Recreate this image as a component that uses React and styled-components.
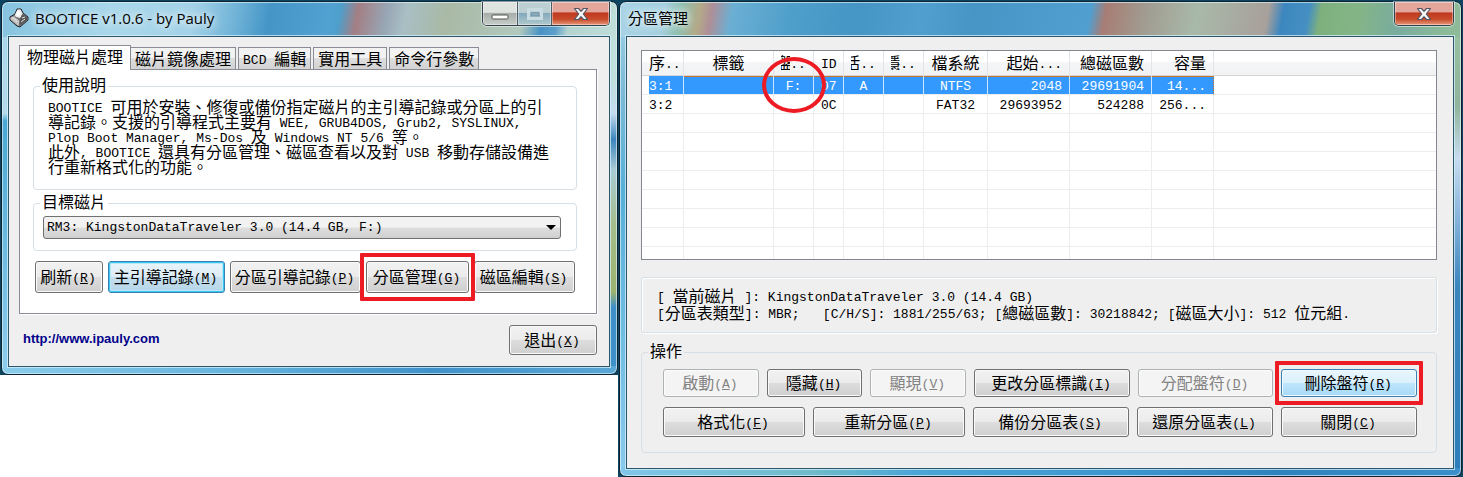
import React from "react";
import styled, { createGlobalStyle, css } from "styled-components";

const GlobalStyle = createGlobalStyle`
  * { box-sizing: border-box; }
  body {
    margin: 0;
    background: #fff;
    color: #000;
    font: 16px/16px "Noto Sans CJK TC", sans-serif;
  }
`;

const Desktop = styled.main`
  display: grid;
  grid-template-columns: minmax(0, 618fr) minmax(0, 845fr);
  align-items: start;
`;

const WindowSlot = styled.div`
  padding: ${(p) => (p.$last ? "1px 1px 0 1px" : "1px 0 0 1px")};
  background: #0d4460;
`;

const Window = styled.section`
  display: flex;
  flex-direction: column;
  padding: 0 7px 7px 6px;
  border: 1px solid #0e2230;
  border-radius: 7px;
  background: ${(p) => p.$glass};
  box-shadow: inset 0 0 0 1px rgba(225, 245, 255, 0.65);
`;

const TitleBar = styled.header`
  display: flex;
  align-items: flex-start;
  height: 34px;
`;

const Title = styled.h1`
  flex: 1;
  display: flex;
  align-items: center;
  gap: 6px;
  height: 32px;
  margin: 0;
  padding-left: ${(p) => (p.$icon ? "1px" : "2px")};
  font: 400 15px/20px "Open Sans", "Noto Sans CJK TC", sans-serif;
  white-space: nowrap;
  text-shadow: 0 0 8px #fff, 0 0 10px rgba(255, 255, 255, 0.8);
`;

const Caption = styled.div`
  display: flex;
  overflow: hidden;
  border: 1px solid #33434e;
  border-top: 0;
  border-radius: 0 0 5px 5px;
  box-shadow: 0 0 0 1px rgba(255, 255, 255, 0.5);
`;

const captionLook = {
  plain: "linear-gradient(#dfe3df 0 45%, #a5aca9 50%, #c8cfca)",
  dim: "linear-gradient(#bccfd3 0 45%, #84aabd 50%, #b1c9cd)",
  close: "linear-gradient(#e2a69b 0 42%, #bf3a20 48%, #c84b2b 75%, #e59b7c)",
};

const CaptionButton = styled.button`
  display: grid;
  place-items: center;
  width: ${(p) => (p.$look === "close" ? "58px" : "34px")};
  height: 23px;
  padding: 0;
  border: 0;
  border-left: ${(p) => (p.$first ? "0" : "1px solid #4d5d66")};
  background: ${(p) => captionLook[p.$look]};
  box-shadow: inset 0 0 0 1px rgba(255, 255, 255, 0.4);
`;

const Body = styled.div`
  border: 1px solid #2c566c;
  background: #efefef;
  box-shadow: 0 0 0 1px rgba(215, 240, 250, 0.75);
  padding: ${(p) => p.$pad};
`;

const Latin = styled.span`
  font-family: "Liberation Mono", monospace;
  font-size: 13px;
  line-height: 0;
  vertical-align: 1px;
  white-space: pre;
`;

const TabList = styled.div`
  display: flex;
  align-items: flex-end;
`;

const Tab = styled.button`
  height: 22px;
  padding: 0 4px 2px;
  margin-right: ${(p) => (p.$active ? "0" : "2px")};
  border: 1px solid #898c95;
  border-bottom: 0;
  border-left-width: ${(p) => (p.$joined ? "0" : "1px")};
  background: linear-gradient(#f2f2f2 45%, #dedede 50%, #d2d2d2);
  color: #000;
  font: inherit;
  white-space: nowrap;
  ${(p) =>
    p.$active &&
    css`
      position: relative;
      height: 25px;
      padding: 0 7px 4px;
      margin-bottom: -1px;
      background: #fff;
    `}
`;

const TabPanel = styled.div`
  padding: 8px 19px 20px 13px;
  border: 1px solid #898c95;
  background: #fff;
  box-shadow: 1px 1px 0 #fff;
`;

const Group = styled.fieldset`
  min-width: 0;
  margin: 0;
  padding: 0 6px ${(p) => p.$bottom};
  border: 1px solid #d5dfe5;
  border-radius: 4px;
  margin-top: ${(p) => p.$top};
`;

const Legend = styled.legend`
  padding: 0 2px;
  height: 16px;
  line-height: 12px;
`;

const Description = styled.p`
  margin: 5px 0 0 8px;
  line-height: 15px;
  white-space: nowrap;
`;

const SelectBox = styled.div`
  position: relative;
  margin: 5px 9px 0 3px;
  &::after {
    content: "";
    position: absolute;
    right: 5px;
    top: 9px;
    border: 5px solid transparent;
    border-top-color: #000;
    border-bottom: 0;
    pointer-events: none;
  }
`;

const Select = styled.select`
  display: block;
  appearance: none;
  width: 100%;
  height: 23px;
  padding: 0 20px 0 3px;
  border: 1px solid #707070;
  border-radius: 3px;
  background: linear-gradient(#f2f2f2 48%, #dedede 52%, #cfcfcf);
  color: #000;
  font: 13px/16px "Liberation Mono", monospace;
`;

const ButtonRow = styled.div`
  display: grid;
  grid-template-columns: ${(p) => p.$columns};
  gap: ${(p) => p.$gap};
  margin: ${(p) => p.$margin};
`;

const buttonLook = {
  normal: css`
    border-color: #707070;
    background: linear-gradient(#f2f2f2, #ebebeb 49%, #dddddd 51%, #cfcfcf);
    box-shadow: inset 0 0 0 1px #fafafa;
  `,
  focus: css`
    border-color: #3c7fb1;
    background: linear-gradient(#eaf4fa, #dcecf5 49%, #c6dfee 51%, #b5d6e9);
    box-shadow: inset 0 0 0 1px #35c9f4, inset 0 0 0 2px #b9e6f7;
  `,
  hot: css`
    border-color: #3c7fb1;
    background: linear-gradient(#eaf6fd, #d9f0fc 49%, #bee6fd 51%, #a7d9f5);
    box-shadow: inset 0 0 0 1px #f0fafe;
  `,
  off: css`
    border-color: #adb2b5;
    background: #f4f4f4;
    color: #838383;
    box-shadow: inset 0 0 0 1px #fcfcfc;
  `,
};

const PushButton = styled.button`
  position: relative;
  min-width: 0;
  height: ${(p) => p.$height || "30px"};
  padding: 0 4px 2px 2px;
  border: 1px solid;
  border-radius: 3px;
  color: #000;
  font: inherit;
  white-space: nowrap;
  ${(p) => buttonLook[p.$look || "normal"]}
`;

const RedBox = styled.span`
  position: absolute;
  z-index: 2;
  inset: -9px -7px;
  border: 4px solid #ed1c24;
  border-radius: 1px;
  pointer-events: none;
`;

const Footer = styled.footer`
  display: flex;
  justify-content: space-between;
  align-items: flex-start;
  padding: 11px 0 11px 4px;
`;

const ExitButton = styled(PushButton)`
  width: 88px;
`;

const SiteLink = styled.a`
  padding-top: 6px;
  color: #00008b;
  font: bold 13px/16px "Liberation Sans", Arial, sans-serif;
  text-decoration: none;
`;

const ListView = styled.div`
  border: 1px solid #828790;
  background: #fff;
`;

const Table = styled.table`
  width: 100%;
  table-layout: fixed;
  border-collapse: separate;
  border-spacing: 0;
`;

const HeadCell = styled.th`
  height: 25px;
  padding: 0 7px 2px;
  border-right: 1px solid #e2e4e7;
  border-bottom: 1px solid #d5d5d5;
  background: linear-gradient(#fff 45%, #f5f6f8 46%, #f1f2f4);
  font-weight: 400;
  text-align: ${(p) => p.$align};
  white-space: nowrap;
  &:last-child { border-right: 0; }
`;

const ClippedGlyph = styled.span`
  display: inline-flex;
  justify-content: ${(p) => (p.$side === "middle" ? "center" : "flex-end")};
  width: 9px;
  overflow: hidden;
  vertical-align: top;
`;

const Cell = styled.td`
  position: relative;
  height: 19px;
  padding: 0 7px 2px;
  border-right: 1px solid #ededed;
  border-bottom: 1px solid #ededed;
  text-align: ${(p) => p.$align};
  white-space: nowrap;
  &:last-child { border-right: 0; }
`;

const Row = styled.tr`
  ${(p) =>
    p.$selected &&
    css`
      color: #fff;
      ${Cell}:not(:last-child) {
        background: #3399ff;
        border-right-color: #cfe6ff;
        box-shadow: inset 0 1px 0 #c8722a;
      }
      ${Cell}:first-child {
        background: linear-gradient(90deg, #fff 7px, #3399ff 7px);
        box-shadow: none;
      }
      ${Cell}:nth-last-child(2) {
        border-right: 1px dotted #d2691e;
      }
    `}
  &:last-child ${Cell} {
    height: 12px;
    border-bottom: 0;
  }
`;

const RedRing = styled.span`
  position: absolute;
  z-index: 2;
  left: 50%;
  top: 50%;
  width: 64px;
  height: 56px;
  transform: translate(-50%, -50%);
  border: 4px solid #ed1c24;
  border-radius: 50%;
  pointer-events: none;
`;

const InfoPanel = styled.div`
  margin-top: 17px;
  padding: 9px 15px 11px;
  border: 1px solid #d5dfe5;
  border-radius: 3px;
  box-shadow: inset 1px 1px 0 #fff, 1px 1px 0 #fff;
  line-height: 17px;
  white-space: nowrap;
`;

const InfoLine = styled.div`
  height: 17px;
`;

/* Sets half-width runs in the monospaced face and leaves ideographs full width. */
function Mixed({ children }) {
  return children
    .split(/([\x20-\x7e]+)/)
    .filter(Boolean)
    .map((run, i) => (/^[\x20-\x7e]/.test(run) ? <Latin key={i}>{run}</Latin> : run));
}

function Button({ label, access, marked, look, height, as: Base = PushButton }) {
  return (
    <Base type="button" $look={look} $height={height} disabled={look === "off"} accessKey={access}>
      {label}
      <Latin>
        (<u>{access}</u>)
      </Latin>
      {marked && <RedBox />}
    </Base>
  );
}

function CloseGlyph() {
  return (
    <svg width="16" height="14" viewBox="0 0 16 14" aria-hidden="true">
      <path
        d="M1.5 1.5h4L8 4.3l2.500-2.800h4L10.300 7l4.200 5.500h-4L8 9.700l-2.500 2.800h-4L5.700 7z"
        fill="#f6f6f6"
        stroke="#535666"
        strokeWidth="1.200"
        strokeLinejoin="round"
      />
    </svg>
  );
}

function AppIcon() {
  return (
    <svg width="20" height="20" viewBox="0 0 20 20" aria-hidden="true">
      <path d="M8 1h4l2 4 5 4v3l-8 7-3-1-7-6V9l5-3z" fill="#8a8a8a" stroke="#222" />
      <path d="M8.500 1.500h3l2 4-2 4.500-5.500-1.500 0-2z" fill="#ededed" />
      <path d="M1.500 9.500L6 8l4.500 4.500-1 5.500-8-6.500z" fill="#c4c4c4" />
      <path d="M13.500 6l5 3.500v2L10.500 18v-6z" fill="#555" />
      <path d="M8.500 3l3 1-1.500 4-3-1z" fill="#fff" />
      <path d="M3 10l3 1 2 3M13 10l3-1M12 14l4-3" fill="none" stroke="#e4e4e4" />
      <path d="M5.500 8.500l5 3.500 3-5" fill="none" stroke="#666" />
    </svg>
  );
}

const columns = [
  { head: "序..", width: 42, align: "left" },
  { head: "標籤", width: 90, align: "center" },
  { head: "盤..", width: 40, align: "center", clipped: "middle" },
  { head: "ID", width: 30, align: "center" },
  { head: "活..", width: 40, align: "center", clipped: "end" },
  { head: "隱..", width: 40, align: "center", clipped: "end" },
  { head: "檔系統", width: 64, align: "center" },
  { head: "起始...", width: 82, align: "right" },
  { head: "總磁區數", width: 82, align: "right" },
  { head: "容量", width: 62, align: "right" },
  { head: "", align: "left" },
];

const partitions = [
  ["3:1", "", "F:", "07", "A", "", "NTFS", "2048", "29691904", "14...", ""],
  ["3:2", "", "", "0C", "", "", "FAT32", "29693952", "524288", "256...", ""],
  ...Array.from({ length: 8 }, () => Array(11).fill("")),
];

const mainGlass = `
  linear-gradient(100deg, #86c3df 0, #a9d7ea 110px, #a3d2e8 190px, #6db1d6 235px, #4596c7 265px, #51a2d1 325px, #4f9fcb 335px, #a37f84 352px, #98a5b4 380px, #a8bfc4 400px, #a9b9a5 440px, #b1c9bd 515px, #4a93c6 535px, #5c9fca 550px, #b4d3cf 562px, #c0dfda) top / 100% 35px no-repeat,
  linear-gradient(90deg, #8accea, #63b2dc 40%, #3f92c9 70%, #5ba7d5) bottom / 100% 8px no-repeat,
  linear-gradient(#a3d5ea, #b4d9ea 30%, #4aa8d3 32%, #8fcdec) left / 50% 100% no-repeat,
  linear-gradient(#bedfdc 0 20%, #c3dcef 30%, #3d86bd 37%, #a9cbd6 45%, #a5bd8b 60%, #9bb36e 78%, #3f8fc8 82%) right / 50% 100% no-repeat`;

const partitionGlass = `
  linear-gradient(100deg, #a8d4e6 0, #a3cfdf 45px, #8fbfae 62px, #b3aa88 80px, #ae8f98 92px, #6bafd3 112px, #4f9fcb 170px, #4595c5 240px, #519fcf 300px, #4795c5 350px, #519fd0 465px, #a77d74 480px, #a19c91 520px, #a8b9a9 570px, #a8a09b 640px, #3c87bf 655px, #458fc2 680px, #7eb07e 692px, #84b587 730px, #79ab9f 770px, #8dbb98 820px) top / 100% 35px no-repeat,
  linear-gradient(90deg, #7fc6ea, #6fbbc9 23%, #4ba5d6 35%, #3d95cf 60%, #2f82be 78%, #3b8fca) bottom / 100% 8px no-repeat,
  linear-gradient(#a3d5ea, #7ebbd6 18%, #57b0d8 40%, #8acbee) left / 50% 100% no-repeat,
  linear-gradient(#9bc3a4, #90b49c 22%, #c6dcee 33%, #8ab6dc 45%, #3c85bf 60%, #2d7dba) right / 50% 100% no-repeat`;

function MainWindow() {
  return (
    <Window $glass={mainGlass} aria-label="BOOTICE">
      <TitleBar>
        <Title $icon>
          <AppIcon />
          BOOTICE v1.0.6 - by Pauly
        </Title>
        <Caption>
          <CaptionButton $look="plain" $first aria-label="最小化">
            <svg width="18" height="12" aria-hidden="true">
              <rect x="1" y="7" width="16" height="4" rx="1" fill="#fff" stroke="#555" />
            </svg>
          </CaptionButton>
          <CaptionButton $look="dim" disabled aria-label="最大化">
            <svg width="18" height="14" aria-hidden="true">
              <rect x="2.500" y="2.500" width="13" height="9" fill="none" stroke="#c9dce2" strokeWidth="3" />
              <rect x="5.500" y="5.500" width="7" height="3" fill="none" stroke="#7c9cae" />
            </svg>
          </CaptionButton>
          <CaptionButton $look="close" aria-label="關閉視窗">
            <CloseGlyph />
          </CaptionButton>
        </Caption>
      </TitleBar>
      <Body $pad="8px 12px 0 10px">
        <TabList role="tablist">
          {["物理磁片處理", "磁片鏡像處理", "BCD 編輯", "實用工具", "命令行參數"].map((name, i) => (
            <Tab key={name} role="tab" aria-selected={i === 0} $active={i === 0} $joined={i === 1}>
              <Mixed>{name}</Mixed>
            </Tab>
          ))}
        </TabList>
        <TabPanel role="tabpanel">
          <Group $bottom="15px" $top="0">
            <Legend>使用說明</Legend>
            <Description>
              {[
                "BOOTICE 可用於安裝、修復或備份指定磁片的主引導記錄或分區上的引",
                "導記錄。支援的引導程式主要有 WEE, GRUB4DOS, Grub2, SYSLINUX,",
                "Plop Boot Manager, Ms-Dos 及 Windows NT 5/6 等。",
                "此外, BOOTICE 還具有分區管理、磁區查看以及對 USB 移動存儲設備進",
                "行重新格式化的功能。",
              ].map((line) => (
                <React.Fragment key={line}>
                  <Mixed>{line}</Mixed>
                  <br />
                </React.Fragment>
              ))}
            </Description>
          </Group>
          <Group $bottom="11px" $top="5px">
            <Legend>
              <label htmlFor="disk">目標磁片</label>
            </Legend>
            <SelectBox>
              <Select id="disk">
                <option>RM3: KingstonDataTraveler 3.0 (14.4 GB, F:)</option>
              </Select>
            </SelectBox>
          </Group>
          <ButtonRow $columns="68fr 117fr 131fr 103fr 101fr" $gap="5px" $margin="10px 2px 0">
            <Button label="刷新" access="R" height="32px" />
            <Button label="主引導記錄" access="M" height="32px" look="focus" />
            <Button label="分區引導記錄" access="P" height="32px" />
            <Button label="分區管理" access="G" height="32px" marked />
            <Button label="磁區編輯" access="S" height="32px" />
          </ButtonRow>
        </TabPanel>
        <Footer>
          <SiteLink href="http://www.ipauly.com">http://www.ipauly.com</SiteLink>
          <Button as={ExitButton} label="退出" access="X" />
        </Footer>
      </Body>
    </Window>
  );
}

function PartitionWindow() {
  return (
    <Window $glass={partitionGlass} aria-label="分區管理">
      <TitleBar>
        <Title>分區管理</Title>
        <Caption>
          <CaptionButton $look="close" $first aria-label="關閉視窗">
            <CloseGlyph />
          </CaptionButton>
        </Caption>
      </TitleBar>
      <Body $pad="13px 16px 15px 14px">
        <ListView>
          <Table>
            <colgroup>
              {columns.map((c, i) => (
                <col key={i} width={c.width} />
              ))}
            </colgroup>
            <thead>
              <tr>
                {columns.map((c, i) => (
                  <HeadCell key={i} $align={c.align}>
                    {c.clipped && <ClippedGlyph $side={c.clipped}>{c.head[0]}</ClippedGlyph>}
                    <Mixed>{c.clipped ? c.head.slice(1) : c.head}</Mixed>
                  </HeadCell>
                ))}
              </tr>
            </thead>
            <tbody>
              {partitions.map((cells, r) => (
                <Row key={r} $selected={r === 0}>
                  {cells.map((text, i) => (
                    <Cell key={i} $align={columns[i].align}>
                      <Mixed>{text}</Mixed>
                      {text === "F:" && <RedRing />}
                    </Cell>
                  ))}
                </Row>
              ))}
            </tbody>
          </Table>
        </ListView>
        <InfoPanel>
          <InfoLine>
            <Mixed>{"[ 當前磁片 ]: KingstonDataTraveler 3.0 (14.4 GB)"}</Mixed>
          </InfoLine>
          <InfoLine>
            <Mixed>{"[分區表類型]: MBR;   [C/H/S]: 1881/255/63; [總磁區數]: 30218842; [磁區大小]: 512 位元組."}</Mixed>
          </InfoLine>
        </InfoPanel>
        <Group $bottom="15px" $top="11px">
          <Legend>操作</Legend>
          <ButtonRow $columns="96fr 96fr 96fr 156fr 136fr 136fr" $gap="8px" $margin="9px 13px 0 15px">
            <Button label="啟動" access="A" height="28px" look="off" />
            <Button label="隱藏" access="H" height="28px" />
            <Button label="顯現" access="V" height="28px" look="off" />
            <Button label="更改分區標識" access="I" height="28px" />
            <Button label="分配盤符" access="D" height="28px" look="off" />
            <Button label="刪除盤符" access="R" height="28px" look="hot" marked />
          </ButtonRow>
          <ButtonRow $columns="142fr 152fr 156fr 136fr 136fr" $gap="8px" $margin="10px 13px 0 15px">
            <Button label="格式化" access="F" />
            <Button label="重新分區" access="P" />
            <Button label="備份分區表" access="S" />
            <Button label="還原分區表" access="L" />
            <Button label="關閉" access="C" />
          </ButtonRow>
        </Group>
      </Body>
    </Window>
  );
}

export default function App() {
  return (
    <>
      <GlobalStyle />
      <Desktop>
        <WindowSlot>
          <MainWindow />
        </WindowSlot>
        <WindowSlot $last>
          <PartitionWindow />
        </WindowSlot>
      </Desktop>
    </>
  );
}
